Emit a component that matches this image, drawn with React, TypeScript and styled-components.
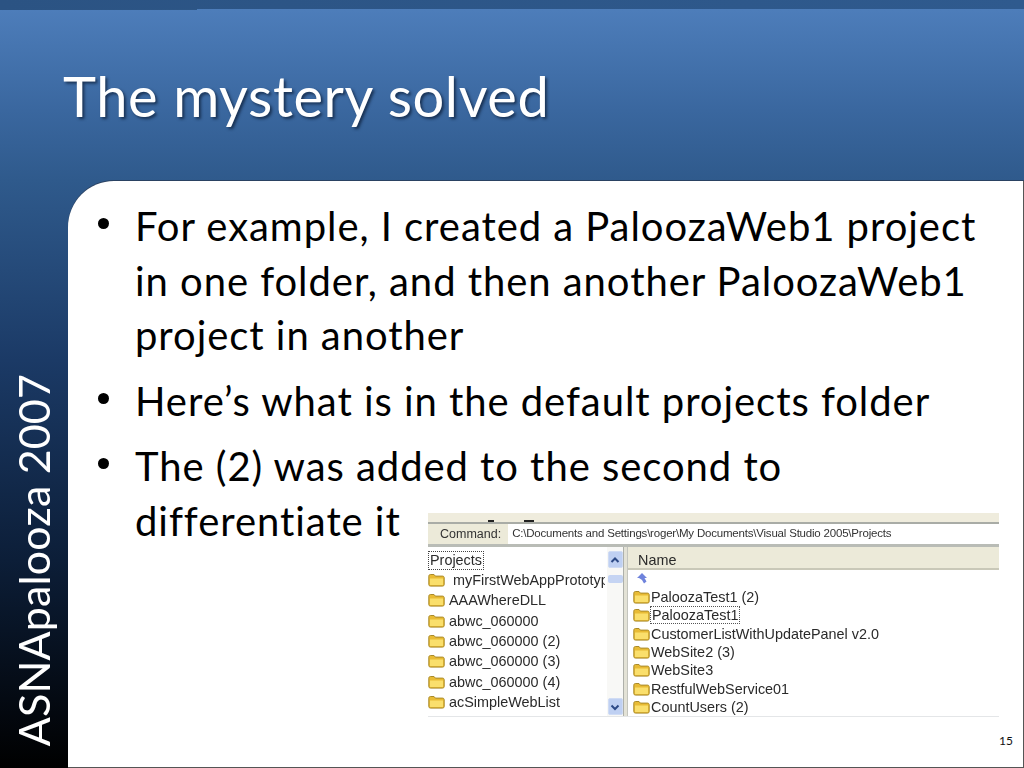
import React from 'react';
import styled, { createGlobalStyle } from 'styled-components';

const GlobalStyle = createGlobalStyle`
  html, body {
    margin: 0;
    padding: 0;
    width: 1024px;
    height: 768px;
    overflow: hidden;
    background: #000;
  }
`;

const Slide = styled.div`
  width: 1024px;
  height: 768px;
  display: flex;
  flex-direction: column;
  font-family: Lato, "Noto Sans", sans-serif;
  background: linear-gradient(180deg, #4d7dba 10px, #3a679f 110px, #2f5a8c 180px, #1b3a66 360px, #0c1e38 560px, #000 768px);
`;

const TopBand = styled.div`
  height: 10px;
  flex: none;
  background:
    linear-gradient(90deg, #2b5383, #2f5a8e) 0 0 / 100% 9px no-repeat,
    linear-gradient(90deg, #2b5383, #2d5686) 0 0 / 197px 10px no-repeat;
`;

const Header = styled.header`
  height: 171px;
  flex: none;
  box-sizing: border-box;
  padding: 50px 0 0 63px;
`;

const Title = styled.h1`
  margin: 0;
  font-size: 56px;
  line-height: 72px;
  font-weight: 400;
  letter-spacing: 0.6px;
  color: #fff;
  text-shadow: 2px 2px 3px rgba(10, 25, 50, 0.7);
`;

const Body = styled.div`
  flex: 1;
  display: flex;
  min-height: 0;
`;

const Sidebar = styled.aside`
  width: 68px;
  flex: none;
  display: flex;
  align-items: flex-end;
  justify-content: center;
  padding-bottom: 22px;
  box-sizing: border-box;
`;

const SideLabel = styled.div`
  writing-mode: vertical-rl;
  transform: rotate(180deg);
  font-size: 43px;
  line-height: 48px;
  letter-spacing: 0.15px;
  color: #fff;
  white-space: nowrap;
`;

const Panel = styled.main`
  flex: 1;
  position: relative;
  background: #fff;
  border-top-left-radius: 46px;
  border-right: 1px solid #555;
  border-bottom: 1px solid #555;
  box-shadow: 0 -1px 0 rgba(40, 50, 70, 0.6);
  padding: 18px 30px 0 67px;
  box-sizing: border-box;
`;

const BulletList = styled.ul`
  list-style: none;
  margin: 0;
  padding: 0;
  color: #000;
  font-size: 40px;
  line-height: 54.5px;
  letter-spacing: 0.95px;
`;

const Bullet = styled.li`
  position: relative;
  margin-bottom: 11px;
  &::before {
    content: '';
    position: absolute;
    left: -37px;
    top: 19px;
    width: 11px;
    height: 11px;
    border-radius: 50%;
    background: #000;
  }
`;

const PageNumber = styled.div`
  position: absolute;
  right: 10px;
  bottom: 19px;
  font-size: 12px;
  line-height: 14px;
  color: #111;
`;

/* pasted picture of the Visual Studio dialog, it sits on top of the slide body */
const Shot = styled.div`
  position: absolute;
  left: 360px;
  top: 332px;
  width: 571px;
  height: 204px;
  display: flex;
  flex-direction: column;
  font-family: "Liberation Sans", Arial, sans-serif;
  color: #2a2a2a;
  background: #fff;
  border-bottom: 1px solid #e4e6e8;
  box-sizing: border-box;
  filter: blur(0.45px);
`;

const ToolStrip = styled.div`
  height: 9px;
  flex: none;
  background: #efecdd;
  overflow: hidden;
  display: flex;
  align-items: flex-end;
  gap: 30px;
  padding-left: 60px;
`;

const ToolMark = styled.span<{ $w: number }>`
  height: 2px;
  width: ${(p) => p.$w}px;
  background: #222;
`;

const CommandBar = styled.div`
  height: 25px;
  flex: none;
  display: flex;
  align-items: center;
  gap: 7px;
  background: #ecead9;
  border-top: 2px solid #a9aca6;
  border-bottom: 3px solid #b9bcb6;
  box-sizing: border-box;
  padding-left: 12px;
`;

const CommandLabel = styled.span`
  font-size: 12.5px;
  color: #333;
`;

const CommandInput = styled.div`
  flex: 1;
  height: 20px;
  line-height: 18px;
  background: #fff;
  font-size: 11.5px;
  padding-left: 4px;
  color: #333;
  letter-spacing: -0.2px;
`;

const Panes = styled.div`
  flex: 1;
  display: flex;
  min-height: 0;
`;

const TreePane = styled.div`
  width: 177px;
  flex: none;
  overflow: hidden;
  padding-top: 4px;
`;

const TreeHead = styled.div`
  display: inline-block;
  font-size: 14.4px;
  line-height: 19px;
  padding: 0 2px;
  outline: 1px dotted #444;
  outline-offset: -1px;
`;

const TreeRow = styled.div<{ $pad?: number }>`
  height: 20.3px;
  display: flex;
  align-items: center;
  gap: ${(p) => p.$pad ?? 4}px;
  font-size: 14.4px;
  white-space: nowrap;
`;

const ScrollBar = styled.div`
  width: 16px;
  flex: none;
  margin-left: 2px;
  display: flex;
  flex-direction: column;
  align-items: center;
  background: #f8f8f6;
  padding: 4px 0 1px;
  box-sizing: border-box;
`;

const ScrollButton = styled.div`
  width: 15px;
  height: 17px;
  flex: none;
  border-radius: 2px;
  background: #bfd0f2;
  border: 1px solid #d0dcf4;
  box-sizing: border-box;
  display: flex;
  align-items: center;
  justify-content: center;
`;

const ScrollThumb = styled.div`
  width: 15px;
  height: 8px;
  margin-top: 7px;
  margin-bottom: auto;
  border-radius: 2px;
  background: #c5d4f3;
`;

const Splitter = styled.div`
  width: 5px;
  flex: none;
  background: #e3e2d6;
  border-left: 1px solid #aeb0aa;
  border-right: 1px solid #c4c5be;
  box-sizing: border-box;
`;

const ListPane = styled.div`
  flex: 1;
  display: flex;
  flex-direction: column;
  min-width: 0;
`;

const ListHead = styled.div`
  height: 23px;
  flex: none;
  line-height: 26px;
  background: #ecead9;
  border-bottom: 2px solid #c9c8b8;
  box-sizing: border-box;
  padding-left: 10px;
  font-size: 14.4px;
`;

const UpRow = styled.div`
  height: 18px;
  padding-left: 8px;
  display: flex;
  align-items: center;
`;

const ListRow = styled.div`
  height: 18.3px;
  display: flex;
  align-items: center;
  gap: 1px;
  padding-left: 5px;
  font-size: 14.4px;
  white-space: nowrap;
`;

const Selected = styled.span`
  outline: 1px dotted #555;
  padding: 0 1px;
`;

function FolderIcon() {
  return (
    <svg width="17" height="14" viewBox="0 0 17 14" style={{ flex: 'none' }}>
      <path d="M.8 11.5V3.2C.8 2.2 1.5 1.5 2.4 1.5H6l1.4 1.6h7.2c.9 0 1.6.7 1.6 1.6v6.8c0 .9-.7 1.6-1.6 1.6H2.4c-.9 0-1.6-.7-1.6-1.6z" fill="#e8bb35" stroke="#a98a2a" strokeWidth="1" />
      <path d="M2 5.6h13v5.8c0 .4-.2.7-.7.7H2.7c-.4 0-.7-.3-.7-.7z" fill="#fadf6c" />
    </svg>
  );
}

function UpIcon() {
  return (
    <svg width="13" height="13" viewBox="0 0 13 13">
      <path d="M6 1l5 5H8.5l2 3.5-2.5 2L6 8 3 6H1z" fill="#6f83dc" />
    </svg>
  );
}

const chevronUp = 'M1.5 6L5 2.5 8.5 6';
const chevronDown = 'M1.5 2.5L5 6 8.5 2.5';

function Chevron({ d }: { d: string }) {
  return (
    <svg width="10" height="8" viewBox="0 0 10 8">
      <path d={d} fill="none" stroke="#2d4a86" strokeWidth="2" />
    </svg>
  );
}

const projects = [
  'AAAWhereDLL',
  'abwc_060000',
  'abwc_060000 (2)',
  'abwc_060000 (3)',
  'abwc_060000 (4)',
  'acSimpleWebList',
];

const folders = [
  'CustomerListWithUpdatePanel v2.0',
  'WebSite2 (3)',
  'WebSite3',
  'RestfulWebService01',
  'CountUsers (2)',
];

export default function App() {
  return (
    <Slide>
      <GlobalStyle />
      <TopBand />
      <Header>
        <Title>The mystery solved</Title>
      </Header>
      <Body>
        <Sidebar>
          <SideLabel>ASNApalooza 2007</SideLabel>
        </Sidebar>
        <Panel>
          <BulletList>
            <Bullet>
              For example, I created a PaloozaWeb1 project in one folder, and then another PaloozaWeb1 project in another
            </Bullet>
            <Bullet>Here’s what is in the default projects folder</Bullet>
            <Bullet>
              The (2) was added to the second to
              <br />
              differentiate it
            </Bullet>
          </BulletList>
          <Shot>
            <ToolStrip>
              <ToolMark $w={6} />
              <ToolMark $w={10} />
            </ToolStrip>
            <CommandBar>
              <CommandLabel>Command:</CommandLabel>
              <CommandInput>C:\Documents and Settings\roger\My Documents\Visual Studio 2005\Projects</CommandInput>
            </CommandBar>
            <Panes>
              <TreePane>
                <TreeHead>Projects</TreeHead>
                <TreeRow $pad={8}>
                  <FolderIcon />
                  myFirstWebAppPrototyp
                </TreeRow>
                {projects.map((name) => (
                  <TreeRow key={name}>
                    <FolderIcon />
                    {name}
                  </TreeRow>
                ))}
              </TreePane>
              <ScrollBar>
                <ScrollButton>
                  <Chevron d={chevronUp} />
                </ScrollButton>
                <ScrollThumb />
                <ScrollButton>
                  <Chevron d={chevronDown} />
                </ScrollButton>
              </ScrollBar>
              <Splitter />
              <ListPane>
                <ListHead>Name</ListHead>
                <UpRow>
                  <UpIcon />
                </UpRow>
                <ListRow>
                  <FolderIcon />
                  PaloozaTest1 (2)
                </ListRow>
                <ListRow>
                  <FolderIcon />
                  <Selected>PaloozaTest1</Selected>
                </ListRow>
                {folders.map((name) => (
                  <ListRow key={name}>
                    <FolderIcon />
                    {name}
                  </ListRow>
                ))}
              </ListPane>
            </Panes>
          </Shot>
          <PageNumber>15</PageNumber>
        </Panel>
      </Body>
    </Slide>
  );
}
